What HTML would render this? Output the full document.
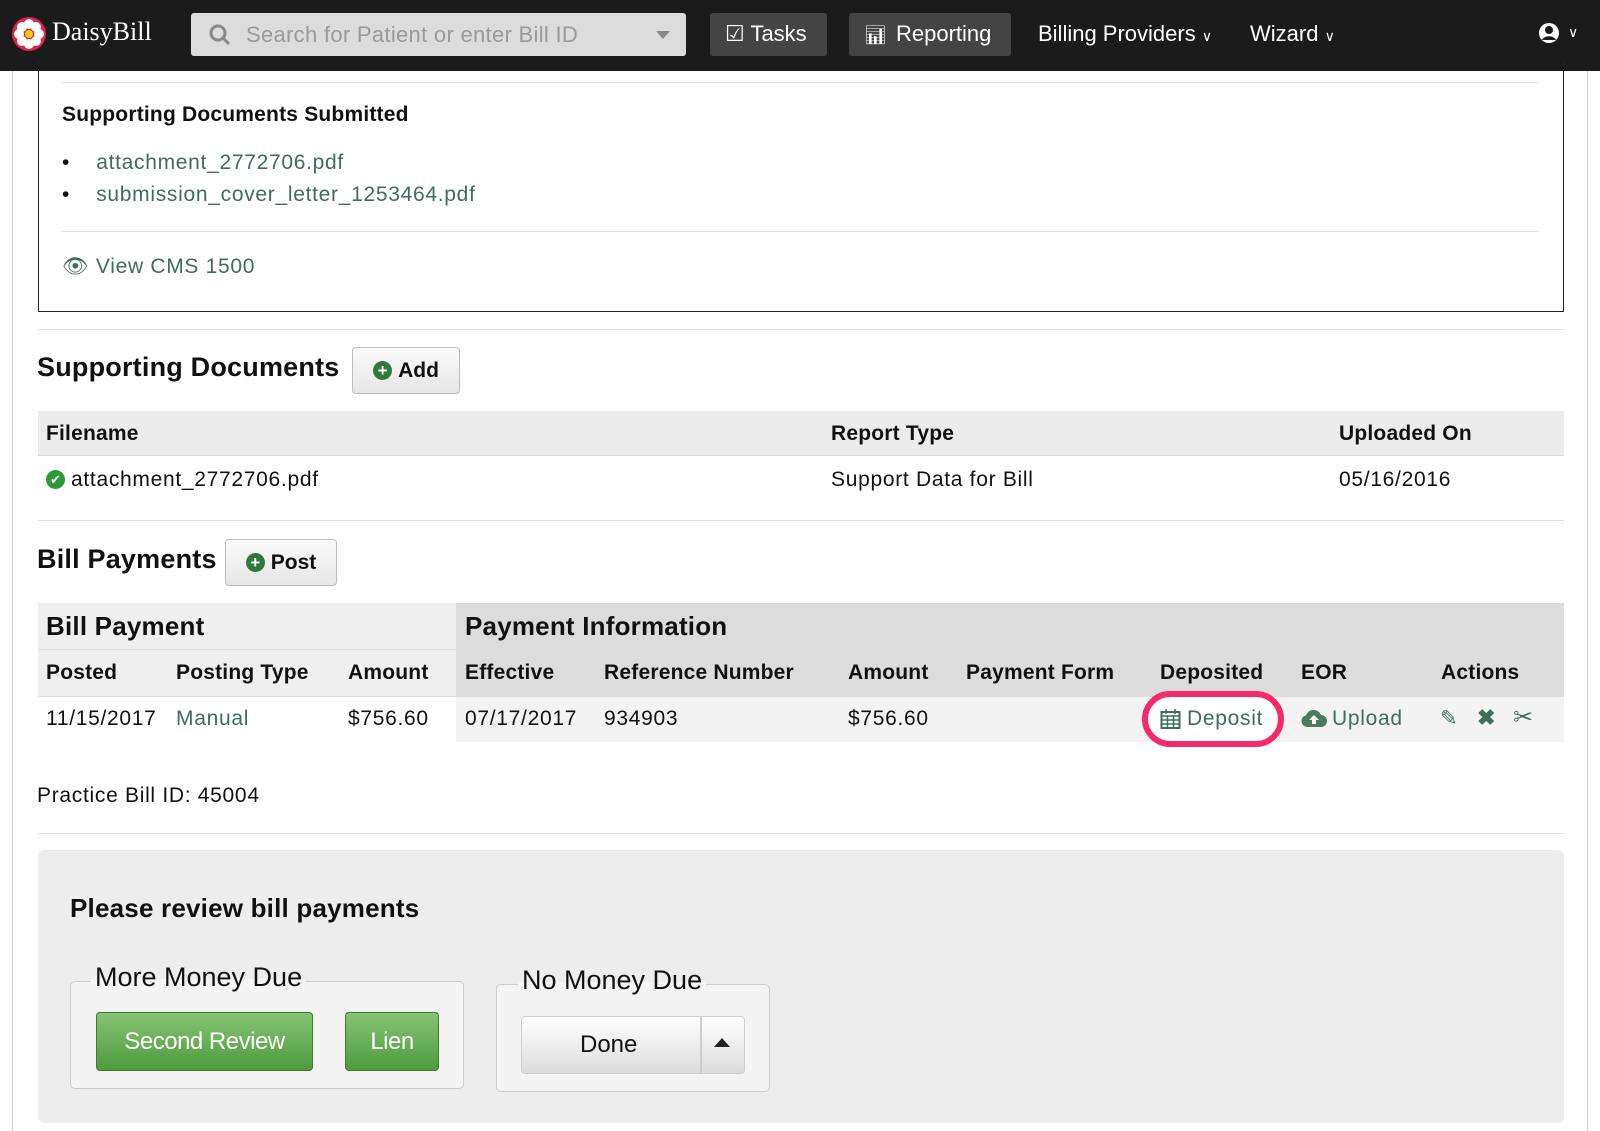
<!DOCTYPE html>
<html><head><meta charset="utf-8"><style>
*{box-sizing:border-box;margin:0;padding:0}
body{width:1600px;height:1131px;overflow:hidden;background:#fff;font-family:"Liberation Sans",sans-serif;color:#111;position:relative}
.a{position:absolute;white-space:nowrap}
.nav{position:absolute;left:0;top:0;width:1600px;height:71px;background:#1b1b1b}
.g{color:#3d6e58}
.f20{font-size:21px;letter-spacing:.7px}
.b{font-weight:bold;letter-spacing:.2px}
.btn{position:absolute;border:1px solid #bbb;border-radius:4px;background:linear-gradient(#fbfbfb,#e6e6e6);font-weight:bold;font-size:21px;display:flex;align-items:center;justify-content:center;gap:6px}
.plus{width:19px;height:19px;border-radius:50%;background:#2f7a3a;color:#fff;font-size:17px;line-height:19px;text-align:center;font-weight:bold}
.gbtn{position:absolute;border:1px solid #3d7a2c;border-radius:4px;background:linear-gradient(#86c476,#4e9a3c);color:#fff;font-size:24px;display:flex;align-items:center;justify-content:center;letter-spacing:-0.5px}
</style></head><body>
<div class="nav">
  <svg class="a" style="left:11px;top:16px" width="36" height="36" viewBox="0 0 36 36"><circle cx="18" cy="18" r="17" fill="#e0244c"/><g fill="#fff"><circle cx="18" cy="8" r="5"/><circle cx="18" cy="28" r="5"/><circle cx="8" cy="18" r="5"/><circle cx="28" cy="18" r="5"/><circle cx="11" cy="11" r="5"/><circle cx="25" cy="11" r="5"/><circle cx="11" cy="25" r="5"/><circle cx="25" cy="25" r="5"/></g><circle cx="18" cy="18" r="4" fill="#f5d000"/></svg>
  <div class="a" style="left:52px;top:17px;color:#fff;font-size:26px;font-family:'Liberation Serif',serif">DaisyBill</div>
  <div class="a" style="left:191px;top:13px;width:495px;height:43px;background:#dcdcdc;border-radius:3px"></div>
  <svg class="a" style="left:208px;top:23px" width="24" height="24" viewBox="0 0 24 24"><circle cx="10" cy="10" r="7" fill="none" stroke="#888" stroke-width="3"/><path d="M15 15l6 6" stroke="#888" stroke-width="3"/></svg>
  <div class="a" style="left:246px;top:22px;color:#999;font-size:22px;letter-spacing:.3px">Search for Patient or enter Bill ID</div>
  <div class="a" style="left:656px;top:31px;border-left:7px solid transparent;border-right:7px solid transparent;border-top:8px solid #888"></div>
  <div class="a" style="left:710px;top:13px;width:117px;height:43px;background:#444;border-radius:3px"></div>
  <div class="a" style="left:725px;top:21px;color:#fff;font-size:22px">&#9745; Tasks</div>
  <div class="a" style="left:849px;top:13px;width:162px;height:43px;background:#444;border-radius:3px"></div>
  <div class="a" style="left:864px;top:21px;color:#fff;font-size:22px"><span style="font-size:18px">&#x1F4CA;&#xFE0E;</span></div>
  <div class="a" style="left:896px;top:21px;color:#fff;font-size:22px">Reporting</div>
  <div class="a" style="left:1038px;top:21px;color:#fff;font-size:22px">Billing Providers <span style="font-size:14px">&#8744;</span></div>
  <div class="a" style="left:1250px;top:21px;color:#fff;font-size:22px">Wizard <span style="font-size:14px">&#8744;</span></div>
  <svg class="a" style="left:1537px;top:21px" width="24" height="24" viewBox="0 0 24 24"><circle cx="12" cy="12" r="10" fill="#fff"/><circle cx="12" cy="9" r="4" fill="#1b1b1b"/><path d="M5 19c2-5 12-5 14 0" fill="#1b1b1b"/></svg>
  <div class="a" style="left:1568px;top:24px;color:#fff;font-size:14px">&#8744;</div>
</div>
<div class="a" style="left:12px;top:71px;width:1px;height:1060px;background:#ccc"></div>
<div class="a" style="left:1587px;top:71px;width:1px;height:1060px;background:#ccc"></div>

<div class="a" style="left:38px;top:60px;width:1526px;height:252px;border:1px solid #222;border-top:none"></div>
<div class="a" style="left:61px;top:82px;width:1478px;height:1px;background:#e3e3e3"></div>
<div class="a b f20" style="left:62px;top:103px">Supporting Documents Submitted</div>
<div class="a f20 g" style="left:62px;top:151px"><span style="color:#111">&bull;</span>&nbsp;&nbsp;&nbsp;&nbsp;attachment_2772706.pdf</div>
<div class="a f20 g" style="left:62px;top:183px"><span style="color:#111">&bull;</span>&nbsp;&nbsp;&nbsp;&nbsp;submission_cover_letter_1253464.pdf</div>
<div class="a" style="left:61px;top:231px;width:1478px;height:1px;background:#e3e3e3"></div>
<div class="a f20 g" style="left:62px;top:255px">&#x1F441;&#xFE0E; View CMS 1500</div>
<div class="a" style="left:38px;top:329px;width:1526px;height:1px;background:#e3e3e3"></div>

<div class="a b" style="left:37px;top:352px;font-size:27px">Supporting Documents</div>
<div class="btn" style="left:352px;top:347px;width:108px;height:47px"><span class="plus">+</span>Add</div>
<div class="a" style="left:38px;top:411px;width:1526px;height:45px;background:#ececec;border-bottom:1px solid #ddd"></div>
<div class="a b f20" style="left:46px;top:422px">Filename</div>
<div class="a b f20" style="left:831px;top:422px">Report Type</div>
<div class="a b f20" style="left:1339px;top:422px">Uploaded On</div>
<div class="a" style="left:46px;top:470px;width:19px;height:19px;border-radius:50%;background:#2c9a3a;color:#fff;font-size:13px;text-align:center;line-height:19px">&#10004;</div>
<div class="a f20" style="left:71px;top:468px">attachment_2772706.pdf</div>
<div class="a f20" style="left:831px;top:468px">Support Data for Bill</div>
<div class="a f20" style="left:1339px;top:468px">05/16/2016</div>
<div class="a" style="left:38px;top:520px;width:1526px;height:1px;background:#e3e3e3"></div>

<div class="a b" style="left:37px;top:544px;font-size:27px">Bill Payments</div>
<div class="btn" style="left:225px;top:539px;width:112px;height:47px"><span class="plus">+</span>Post</div>

<div class="a" style="left:38px;top:603px;width:418px;height:93px;background:#efefef"></div>
<div class="a" style="left:456px;top:603px;width:1108px;height:93px;background:#dcdcdc"></div>
<div class="a" style="left:38px;top:649px;width:418px;height:1px;background:#ddd"></div>
<div class="a" style="left:38px;top:696px;width:1526px;height:1px;background:#ddd"></div>
<div class="a" style="left:456px;top:697px;width:1108px;height:45px;background:#f3f3f3"></div>
<div class="a b" style="left:46px;top:611px;font-size:26px">Bill Payment</div>
<div class="a b" style="left:465px;top:611px;font-size:26px">Payment Information</div>
<div class="a b f20" style="left:46px;top:661px">Posted</div>
<div class="a b f20" style="left:176px;top:661px">Posting Type</div>
<div class="a b f20" style="left:348px;top:661px">Amount</div>
<div class="a b f20" style="left:465px;top:661px">Effective</div>
<div class="a b f20" style="left:604px;top:661px">Reference Number</div>
<div class="a b f20" style="left:848px;top:661px">Amount</div>
<div class="a b f20" style="left:966px;top:661px">Payment Form</div>
<div class="a b f20" style="left:1160px;top:661px">Deposited</div>
<div class="a b f20" style="left:1301px;top:661px">EOR</div>
<div class="a b f20" style="left:1441px;top:661px">Actions</div>
<div class="a f20" style="left:46px;top:707px">11/15/2017</div>
<div class="a f20 g" style="left:176px;top:707px">Manual</div>
<div class="a f20" style="left:348px;top:707px">$756.60</div>
<div class="a f20" style="left:465px;top:707px">07/17/2017</div>
<div class="a f20" style="left:604px;top:707px">934903</div>
<div class="a f20" style="left:848px;top:707px">$756.60</div>
<div class="a" style="left:1142px;top:691px;width:142px;height:56px;border:6px solid #f52a68;border-radius:28px;background:#fff"></div>
<svg class="a" style="left:1160px;top:708px" width="21" height="22" viewBox="0 0 21 22"><rect x="1.5" y="4" width="18" height="16" fill="none" stroke="#3d6e58" stroke-width="2"/><path d="M1.5 8h18M7.5 8v12M13.5 8v12M1.5 12h18M1.5 16h18M6 1v5M15 1v5" stroke="#3d6e58" stroke-width="1.5"/></svg>
<div class="a f20 g" style="left:1187px;top:707px">Deposit</div>
<svg class="a" style="left:1301px;top:709px" width="26" height="18" viewBox="0 0 26 18"><path d="M6 18a6 6 0 0 1-1-11.8A8 8 0 0 1 20 6a6 6 0 0 1 0 12z" fill="#4b7a63"/><path d="M13 6l-5 5h3v4h4v-4h3z" fill="#fff"/></svg>
<div class="a f20 g" style="left:1332px;top:707px">Upload</div>
<div class="a g" style="left:1440px;top:706px;font-size:21px">&#9998;</div>
<div class="a g b" style="left:1477px;top:705px;font-size:22px">&#10006;</div>
<div class="a g" style="left:1513px;top:703px;font-size:24px">&#9986;</div>

<div class="a f20" style="left:37px;top:784px">Practice Bill ID: 45004</div>
<div class="a" style="left:38px;top:833px;width:1526px;height:1px;background:#e3e3e3"></div>

<div class="a" style="left:38px;top:850px;width:1526px;height:273px;background:#ededed;border-radius:6px"></div>
<div class="a b" style="left:70px;top:893px;font-size:26px">Please review bill payments</div>
<div class="a" style="left:70px;top:981px;width:394px;height:108px;border:1px solid #ccc;border-radius:5px;background:#f4f4f4"></div>
<div class="a" style="left:91px;top:962px;font-size:27px;padding:0 4px;background:linear-gradient(#ededed 55%,#f4f4f4 55%)">More Money Due</div>
<div class="gbtn" style="left:96px;top:1012px;width:217px;height:59px">Second Review</div>
<div class="gbtn" style="left:345px;top:1012px;width:94px;height:59px">Lien</div>
<div class="a" style="left:496px;top:984px;width:274px;height:108px;border:1px solid #ccc;border-radius:5px;background:#f4f4f4"></div>
<div class="a" style="left:518px;top:965px;font-size:27px;padding:0 4px;background:linear-gradient(#ededed 55%,#f4f4f4 55%)">No Money Due</div>
<div class="a" style="left:521px;top:1016px;width:224px;height:58px;border:1px solid #ccc;border-radius:4px;background:linear-gradient(#fff,#dcdcdc)"></div>
<div class="a" style="left:700px;top:1017px;width:2px;height:56px;background:#ccc"></div>
<div class="a" style="left:580px;top:1031px;font-size:24px">Done</div>
<div class="a" style="left:714px;top:1038px;border-left:8px solid transparent;border-right:8px solid transparent;border-bottom:9px solid #222"></div>
</body></html>
